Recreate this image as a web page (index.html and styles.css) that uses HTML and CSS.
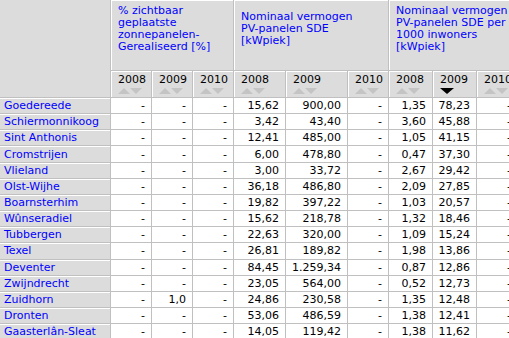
FILE: index.html
```html
<!DOCTYPE html>
<html lang="nl">

<head>
  <meta charset="UTF-8">
  <meta name="viewport" content="width=device-width, initial-scale=1.0">
  <title>Zonnepanelen per gemeente</title>
  <link rel="stylesheet" href="styles.css">
</head>

<body>
  <!-- tabel met zonnepanelen per gemeente -->
  <table class="stats">
    <colgroup>
      <col class="c-name">
      <col class="c-40"><col class="c-40"><col class="c-40">
      <col class="c-51"><col class="c-61"><col class="c-40">
      <col class="c-43"><col class="c-43"><col class="c-40">
    </colgroup>
    <thead>
      <tr class="groups">
        <th class="corner" rowspan="2"></th>
        <th class="group" colspan="3"><a href="#">% zichtbaar<br>geplaatste<br>zonnepanelen-<br>Gerealiseerd [%]</a></th>
        <th class="group" colspan="3"><a href="#">Nominaal vermogen<br>PV-panelen SDE<br>[kWpiek]</a></th>
        <th class="group" colspan="3"><a href="#">Nominaal vermogen<br>PV-panelen SDE per<br>1000 inwoners<br>[kWpiek]</a></th>
      </tr>
      <tr class="years">
        <th class="year">2008<div class="sort"><span class="up"></span><span class="down"></span></div></th>
        <th class="year">2009<div class="sort"><span class="up"></span><span class="down"></span></div></th>
        <th class="year">2010<div class="sort"><span class="up"></span><span class="down"></span></div></th>
        <th class="year">2008<div class="sort"><span class="up"></span><span class="down"></span></div></th>
        <th class="year">2009<div class="sort"><span class="up"></span><span class="down"></span></div></th>
        <th class="year">2010<div class="sort"><span class="up"></span><span class="down"></span></div></th>
        <th class="year">2008<div class="sort"><span class="up"></span><span class="down"></span></div></th>
        <th class="year">2009<div class="sort active"><span class="down"></span></div></th>
        <th class="year">2010<div class="sort"><span class="up"></span><span class="down"></span></div></th>
      </tr>
    </thead>
    <tbody>
      <tr><td class="name"><a href="#">Goedereede</a></td><td>-</td><td>-</td><td>-</td><td>15,62</td><td>900,00</td><td>-</td><td>1,35</td><td>78,23</td><td>-</td></tr>
      <tr><td class="name"><a href="#">Schiermonnikoog</a></td><td>-</td><td>-</td><td>-</td><td>3,42</td><td>43,40</td><td>-</td><td>3,60</td><td>45,88</td><td>-</td></tr>
      <tr><td class="name"><a href="#">Sint Anthonis</a></td><td>-</td><td>-</td><td>-</td><td>12,41</td><td>485,00</td><td>-</td><td>1,05</td><td>41,15</td><td>-</td></tr>
      <tr><td class="name"><a href="#">Cromstrijen</a></td><td>-</td><td>-</td><td>-</td><td>6,00</td><td>478,80</td><td>-</td><td>0,47</td><td>37,30</td><td>-</td></tr>
      <tr><td class="name"><a href="#">Vlieland</a></td><td>-</td><td>-</td><td>-</td><td>3,00</td><td>33,72</td><td>-</td><td>2,67</td><td>29,42</td><td>-</td></tr>
      <tr><td class="name"><a href="#">Olst-Wijhe</a></td><td>-</td><td>-</td><td>-</td><td>36,18</td><td>486,80</td><td>-</td><td>2,09</td><td>27,85</td><td>-</td></tr>
      <tr><td class="name"><a href="#">Boarnsterhim</a></td><td>-</td><td>-</td><td>-</td><td>19,82</td><td>397,22</td><td>-</td><td>1,03</td><td>20,57</td><td>-</td></tr>
      <tr><td class="name"><a href="#">Wûnseradiel</a></td><td>-</td><td>-</td><td>-</td><td>15,62</td><td>218,78</td><td>-</td><td>1,32</td><td>18,46</td><td>-</td></tr>
      <tr><td class="name"><a href="#">Tubbergen</a></td><td>-</td><td>-</td><td>-</td><td>22,63</td><td>320,00</td><td>-</td><td>1,09</td><td>15,24</td><td>-</td></tr>
      <tr><td class="name"><a href="#">Texel</a></td><td>-</td><td>-</td><td>-</td><td>26,81</td><td>189,82</td><td>-</td><td>1,98</td><td>13,86</td><td>-</td></tr>
      <tr><td class="name"><a href="#">Deventer</a></td><td>-</td><td>-</td><td>-</td><td>84,45</td><td>1.259,34</td><td>-</td><td>0,87</td><td>12,86</td><td>-</td></tr>
      <tr><td class="name"><a href="#">Zwijndrecht</a></td><td>-</td><td>-</td><td>-</td><td>23,05</td><td>564,00</td><td>-</td><td>0,52</td><td>12,73</td><td>-</td></tr>
      <tr><td class="name"><a href="#">Zuidhorn</a></td><td>-</td><td>1,0</td><td>-</td><td>24,86</td><td>230,58</td><td>-</td><td>1,35</td><td>12,48</td><td>-</td></tr>
      <tr><td class="name"><a href="#">Dronten</a></td><td>-</td><td>-</td><td>-</td><td>53,06</td><td>486,59</td><td>-</td><td>1,38</td><td>12,41</td><td>-</td></tr>
      <tr><td class="name"><a href="#">Gaasterlân-Sleat</a></td><td>-</td><td>-</td><td>-</td><td>14,05</td><td>119,42</td><td>-</td><td>1,38</td><td>11,62</td><td>-</td></tr>
    </tbody>
  </table>
</body>

</html>
```

FILE: styles.css
```css
/* pagina */
body {
  margin: 0;
  overflow: hidden;
  background-color: #fff;
  font-family: "DejaVu Sans", Verdana, sans-serif;
  font-size: 11px;
  color: #000;
}

a {
  color: #0000ff;
  text-decoration: none;
}

/* tabel */
.stats {
  border-collapse: separate;
  border-spacing: 0;
  table-layout: fixed;
  width: 518px;
}

.c-name { width: 111px; }
.c-40 { width: 41px; }
.c-43 { width: 44px; }
.c-51 { width: 52px; }
.c-61 { width: 62px; }

.stats th,
.stats td {
  border-right: 1px solid #c0c0c0;
  border-bottom: 1px solid #c0c0c0;
  overflow: hidden;
  white-space: nowrap;
}

/* koppen */
.stats th {
  background-color: #dcdcdc;
  font-weight: normal;
  text-align: left;
  box-shadow: inset 1px 1px 0 #fff;
}

.stats th.corner {
  box-shadow: none;
}

.groups th {
  height: 53px;
  padding: 2px 7px 15px;
  line-height: 12px;
  vertical-align: middle;
}

.years th {
  height: 23px;
  padding: 3px 7px 0;
  line-height: 12px;
  vertical-align: top;
}

/* sorteerpijltjes */
.sort {
  display: flex;
  height: 6px;
  margin-top: 2px;
}

.sort .up,
.sort .down {
  width: 0;
  height: 0;
  border-left: 6px solid transparent;
  border-right: 6px solid transparent;
}

.sort .up {
  border-bottom: 6px solid #c4c4c4;
}

.sort .down {
  border-top: 6px solid #c4c4c4;
}

.sort.active .down {
  border-left-width: 7px;
  border-right-width: 7px;
  border-top-color: #000;
}

/* data */
.stats td {
  height: 15.17px;
  padding: 0 6px 0 4px;
  line-height: 15px;
  text-align: right;
  background-color: #fff;
}

.stats td.name {
  text-align: left;
  background-color: #dcdcdc;
  box-shadow: inset 0 1px 0 #fff;
}
```
